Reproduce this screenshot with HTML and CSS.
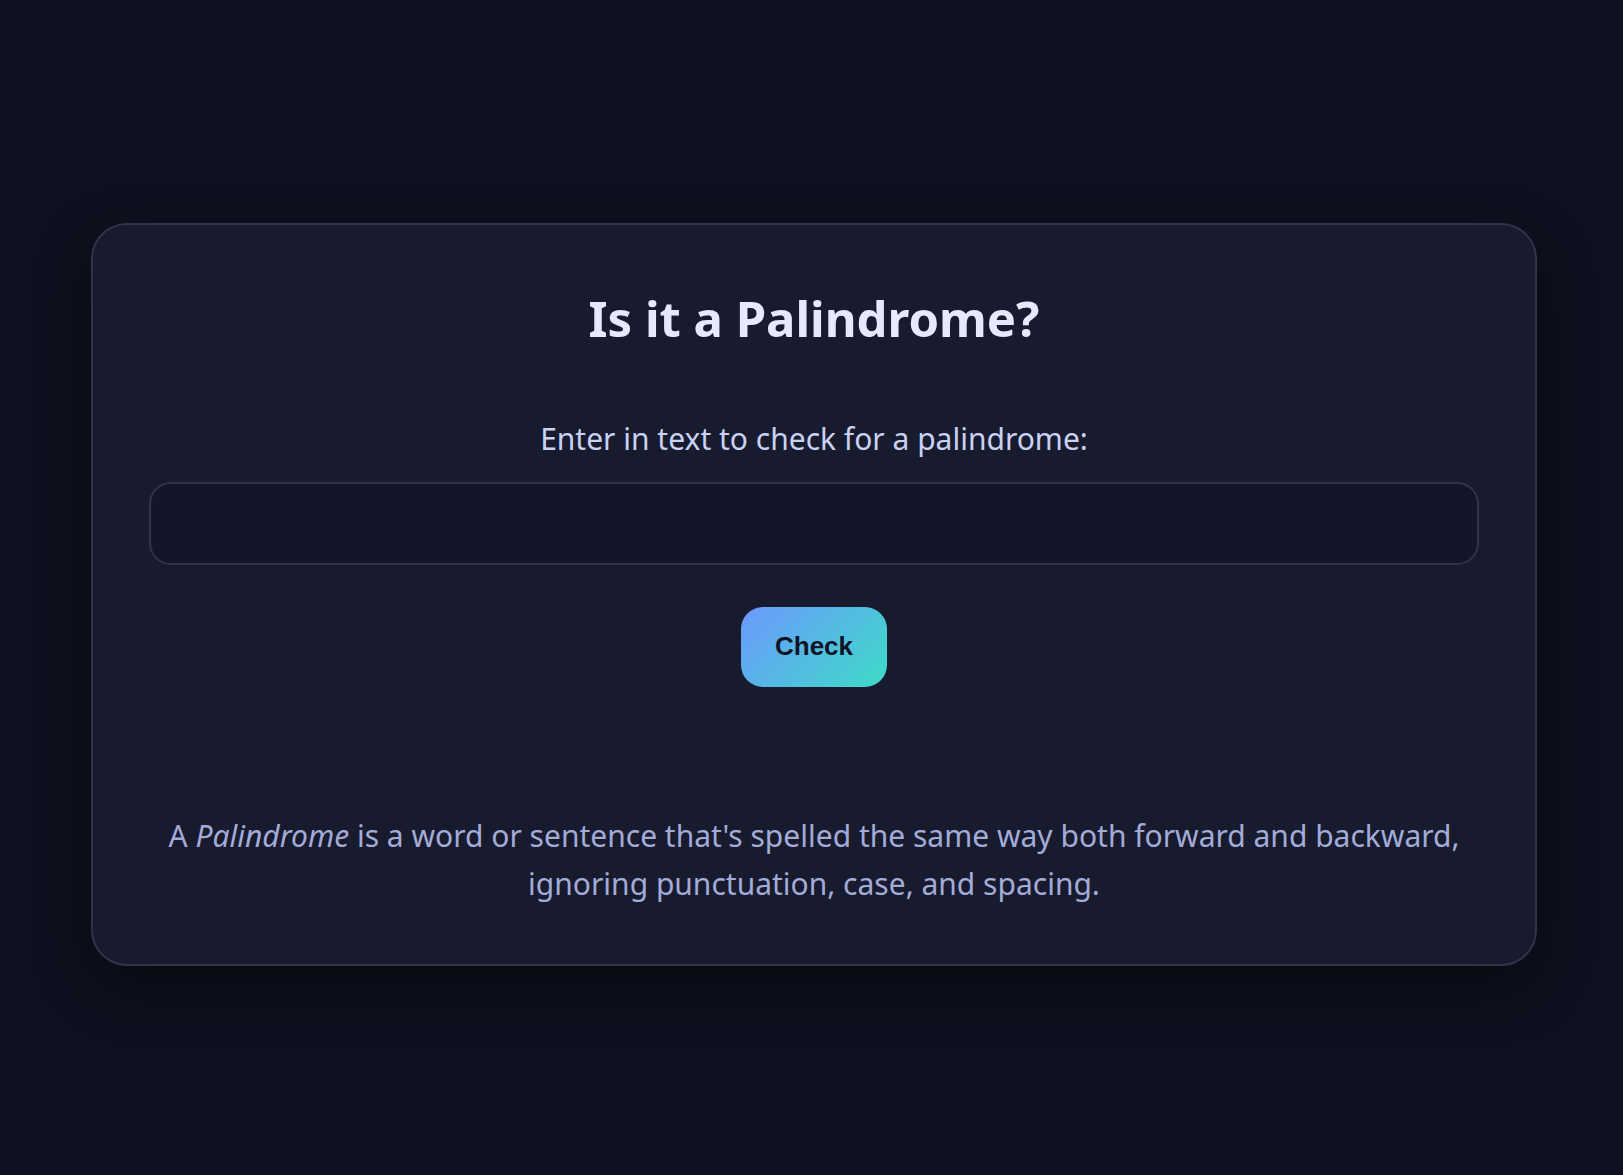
FILE: index.html
```html
<!DOCTYPE html>
<html lang="en">
<head>
    <meta charset="UTF-8">
    <meta name="viewport" content="width=device-width, initial-scale=1.0">
    <title>Palindrome Checker</title>
    <link rel="stylesheet" href="styles.css">
</head>
<body>
    <main class="card">
        <h1 class="title">Is it a Palindrome?</h1>
        <form class="checker" id="checkerForm">
            <label for="textInput" class="checker-label">Enter in text to check for a palindrome:</label>
            <input type="text" id="textInput" class="checker-input">
            <button type="button" id="checkButton" class="check-btn">Check</button>
        </form>
        <div id="result" class="result"></div>
        <p class="note">A <em>Palindrome</em> is a word or sentence that's spelled the same way both forward and backward, ignoring punctuation, case, and spacing.</p>
    </main>
</body>
</html>
```

FILE: styles.css
```css
:root {
    --page-bg: #0e111f;
    --card-bg: #181b2d;
    --card-border: #313449;
    --input-bg: #13152a;
    --title: #e6e8ff;
    --label: #c9d1f5;
    --muted: #a3abd9;
}

body {
    margin: 0;
    padding: 0;
    font-family: "Noto Sans", "Open Sans", sans-serif;
    background-color: var(--page-bg);
    display: flex;
    justify-content: center;
    align-items: center;
    min-height: 100vh;
}

.card {
    box-sizing: border-box;
    width: 1446px;
    margin-left: 5px;
    margin-top: 14px;
    background-color: var(--card-bg);
    border: 2px solid var(--card-border);
    border-radius: 36px;
    padding: 64px 56px 56px;
    box-shadow: 0 20px 60px rgba(0, 0, 0, 0.45);
    text-align: center;
}

.title {
    margin: 0;
    color: var(--title);
    font-size: 49px;
    font-weight: 700;
    line-height: 1.2;
}

.checker {
    display: flex;
    flex-direction: column;
    align-items: center;
    margin-top: 70px;
}

.checker-label {
    color: var(--label);
    font-size: 30px;
    line-height: 1.4;
}

.checker-input {
    box-sizing: border-box;
    width: 100%;
    height: 83px;
    margin-top: 22px;
    background-color: var(--input-bg);
    border: 2px solid var(--card-border);
    border-radius: 22px;
    padding: 0 24px;
    color: var(--title);
    font-family: inherit;
    font-size: 28px;
    outline: none;
}

.check-btn {
    margin-top: 42px;
    width: 146px;
    height: 80px;
    border: none;
    border-radius: 22px;
    background: linear-gradient(135deg, #6c98ff, #3ddcc6);
    color: #0f1427;
    font-family: "Liberation Sans", Arial, sans-serif;
    font-size: 26px;
    font-weight: 700;
    cursor: pointer;
}

.result {
    min-height: 95px;
}

.note {
    margin: 30px 0 0;
    color: var(--muted);
    font-size: 30px;
    line-height: 1.6;
}
```
